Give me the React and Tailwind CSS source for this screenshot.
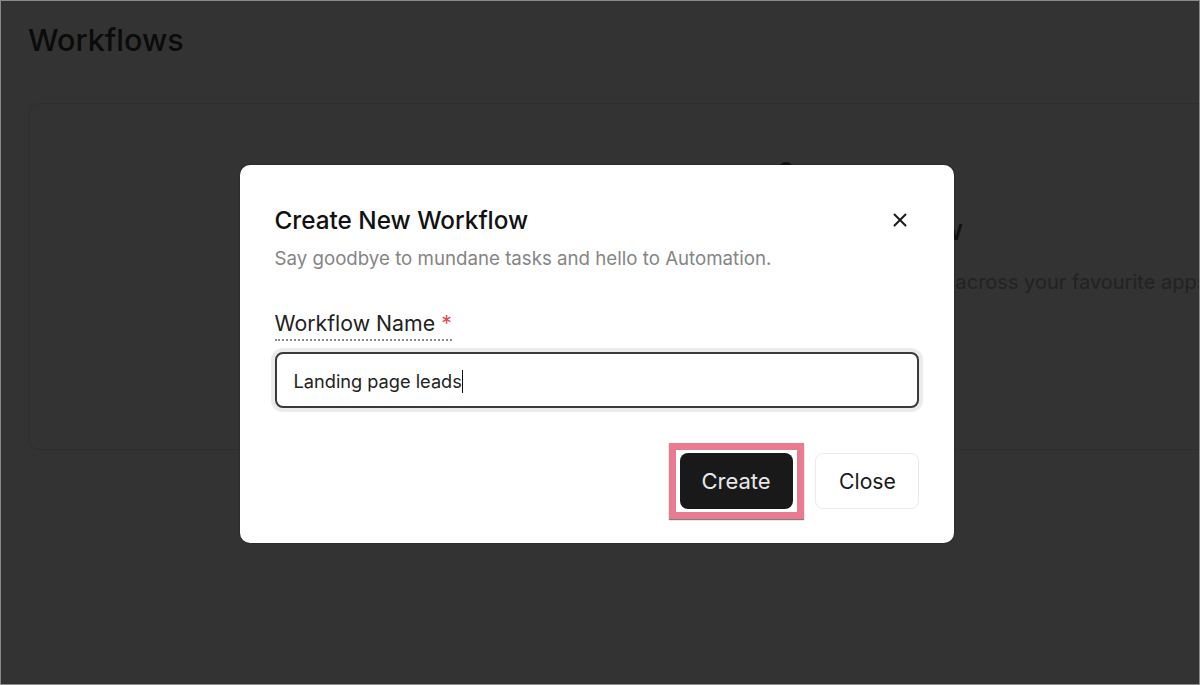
import React from "react";

export default function App() {
  return (
    <div className="relative h-[685px] w-[1200px] overflow-hidden border border-[#8a8a8a] bg-[#333333] font-['Inter','Noto_Sans',sans-serif]">
      {/* Page behind the dimming layer */}
      <div className="flex h-full flex-col pl-[27px] pt-[21px]">
        <h1 className="text-[30.5px] leading-[36px] font-medium text-[#0b0b0b]">Workflows</h1>
        <div className="mt-[45px] flex h-[347px] w-[1400px] flex-col items-center rounded-tl-xl rounded-bl-xl border border-[#2e2e2e] pl-[115px] pt-[55px]">
          <svg width="24" height="24" viewBox="0 0 24 24" className="text-[#111]" fill="currentColor">
            <circle cx="12" cy="10" r="7" />
          </svg>
          <h2 className="mt-[31px] text-[28.5px] leading-[32px] font-medium whitespace-nowrap text-[#111]">Create your first workflow</h2>
          <p className="mt-[22px] text-[20px] leading-[28px] whitespace-nowrap text-[#222222]">Connect your tools and automate your daily or repetitive tasks across your favourite apps</p>
        </div>
      </div>

      {/* Modal */}
      <div className="absolute inset-0 flex items-center justify-center pt-[22px] pr-[7px]">
        <div className="w-[714px] rounded-[10px] bg-white px-[35px] pt-[39px] pb-[34px] shadow-[0_0_2px_rgba(0,0,0,0.4)]">
          <div className="flex items-center justify-between">
            <h3 className="text-[24.3px] leading-[32px] font-medium text-[#111]">Create New Workflow</h3>
            <svg width="24" height="24" viewBox="0 0 24 24" fill="none" stroke="#1a1a1a" strokeWidth="2" strokeLinecap="round" className="mr-[7px]">
              <path d="M6.5 6.5l11 11M17.5 6.5l-11 11" />
            </svg>
          </div>
          <p className="mt-[10px] text-[18.7px] leading-[26px] text-[#858585]">Say goodbye to mundane tasks and hello to Automation.</p>

          <div className="mt-[37px] inline-block border-b-2 border-dotted border-[#8a8a8a] pb-[2px] text-[21.3px] leading-[28px] text-[#222]">
            Workflow Name <span className="text-[#e5484d]">*</span>
          </div>

          <div className="mt-[11px] flex h-[56px] items-center rounded-lg border-2 border-[#3a3a3a] bg-white pt-[4px] pl-[17px] text-[18.2px] text-[#222] shadow-[0_0_0_4px_#ebebeb]">
            <span>Landing page leads</span>
            <span className="h-[23px] w-px bg-[#111]" />
          </div>

          <div className="mt-[45px] flex justify-end gap-[22px]">
            <div className="relative">
              <button className="h-[56px] w-[113px] rounded-lg bg-[#191919] pt-[1px] text-[22px] text-[#e8e8e8]">Create</button>
              <span className="absolute -inset-x-[11px] -top-[10px] -bottom-[10px] border-[7px] border-[#e97b90] shadow-[0_1px_1px_rgba(0,0,0,0.5)]" />
            </div>
            <button className="h-[56px] w-[104px] rounded-lg border border-[#ebebeb] bg-white pt-[2px] pl-[2px] text-[21.2px] text-[#1a1a1a]">Close</button>
          </div>
        </div>
      </div>
    </div>
  );
}
